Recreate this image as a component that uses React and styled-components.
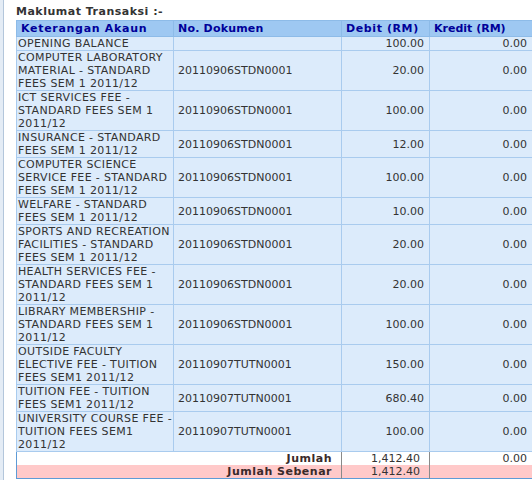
import React from 'react'
import styled, { createGlobalStyle } from 'styled-components'

const GlobalStyle = createGlobalStyle`
  html, body {
    margin: 0;
    padding: 0;
    background: #ffffff;
  }
  body {
    font-family: "DejaVu Sans", Verdana, sans-serif;
    font-size: 11px;
    color: #333333;
  }
`

const Page = styled.div`
  display: flex;
  min-height: 480px;
`

const SideStrip = styled.div`
  width: 3px;
  flex: none;
  background: #e4ecf5;
  border-right: 1px solid #b3c6db;
`

const Content = styled.div`
  flex: 1;
  padding: 5px 0 0 12px;
  overflow: hidden;
`

const Heading = styled.div`
  font-weight: bold;
  line-height: 13px;
  letter-spacing: 0.5px;
  color: #333333;
  margin: 0 0 2px 0;
`

const Table = styled.table`
  border-collapse: collapse;
  table-layout: fixed;
  width: 516px;
  border: 1px solid #5d9bd6;
  line-height: 13px;
`

const Th = styled.th`
  background: #9ec8f2;
  color: #000099;
  font-weight: bold;
  text-align: left;
  padding: 1px 0 1px 4px;
  border: 1px solid #8dbbe8;
  white-space: nowrap;
  letter-spacing: ${p => p.$ls || 0}px;
`

const Td = styled.td`
  background: #dcebfb;
  border: 1px solid #a9cbee;
  padding: 0 ${p => (p.$num ? '5px' : '1px')} 0 ${p => (p.$doc ? '4px' : '1px')};
  text-align: ${p => (p.$num ? 'right' : 'left')};
  vertical-align: middle;
  white-space: nowrap;
  color: #333333;
  letter-spacing: ${p => (p.$num || p.$doc ? 0 : 0.35)}px;
`

const TotalCell = styled.td`
  background: ${p => (p.$pink ? '#ffc9c9' : '#ffffff')};
  border: none;
  border-right: ${p => (p.$line ? '1px solid #8a8a8a' : 'none')};
  padding: 0 9px 0 1px;
  text-align: right;
  font-weight: ${p => (p.$bold ? 'bold' : 'normal')};
  letter-spacing: ${p => (p.$bold ? 0.5 : 0)}px;
  color: ${p => (p.$bold ? '#3a2a2a' : '#333333')};
  white-space: nowrap;
`

const rows = [
  { desc: ['OPENING BALANCE'], doc: '', debit: '100.00' },
  { desc: ['COMPUTER LABORATORY', 'MATERIAL - STANDARD', 'FEES SEM 1 2011/12'], doc: '20110906STDN0001', debit: '20.00' },
  { desc: ['ICT SERVICES FEE -', 'STANDARD FEES SEM 1', '2011/12'], doc: '20110906STDN0001', debit: '100.00' },
  { desc: ['INSURANCE - STANDARD', 'FEES SEM 1 2011/12'], doc: '20110906STDN0001', debit: '12.00' },
  { desc: ['COMPUTER SCIENCE', 'SERVICE FEE - STANDARD', 'FEES SEM 1 2011/12'], doc: '20110906STDN0001', debit: '100.00' },
  { desc: ['WELFARE - STANDARD', 'FEES SEM 1 2011/12'], doc: '20110906STDN0001', debit: '10.00' },
  { desc: ['SPORTS AND RECREATION', 'FACILITIES - STANDARD', 'FEES SEM 1 2011/12'], doc: '20110906STDN0001', debit: '20.00' },
  { desc: ['HEALTH SERVICES FEE -', 'STANDARD FEES SEM 1', '2011/12'], doc: '20110906STDN0001', debit: '20.00' },
  { desc: ['LIBRARY MEMBERSHIP -', 'STANDARD FEES SEM 1', '2011/12'], doc: '20110906STDN0001', debit: '100.00' },
  { desc: ['OUTSIDE FACULTY', 'ELECTIVE FEE - TUITION', 'FEES SEM1 2011/12'], doc: '20110907TUTN0001', debit: '150.00' },
  { desc: ['TUITION FEE - TUITION', 'FEES SEM1 2011/12'], doc: '20110907TUTN0001', debit: '680.40' },
  { desc: ['UNIVERSITY COURSE FEE -', 'TUITION FEES SEM1', '2011/12'], doc: '20110907TUTN0001', debit: '100.00' },
]

export default function App() {
  return (
    <>
      <GlobalStyle />
      <Page>
        <SideStrip />
        <Content>
          <Heading>Maklumat Transaksi :-</Heading>
          <Table>
            <colgroup>
              <col style={{ width: 157 }} />
              <col style={{ width: 168 }} />
              <col style={{ width: 88 }} />
              <col style={{ width: 103 }} />
            </colgroup>
            <thead>
              <tr>
                <Th $ls={0.7}>Keterangan Akaun</Th>
                <Th $ls={0.2}>No. Dokumen</Th>
                <Th $ls={0.6}>Debit (RM)</Th>
                <Th>Kredit (RM)</Th>
              </tr>
            </thead>
            <tbody>
              {rows.map((r, i) => (
                <tr key={i}>
                  <Td>
                    {r.desc.map((line, j) => (
                      <React.Fragment key={j}>
                        {j > 0 && <br />}
                        {line}
                      </React.Fragment>
                    ))}
                  </Td>
                  <Td $doc>{r.doc}</Td>
                  <Td $num>{r.debit}</Td>
                  <Td $num>0.00</Td>
                </tr>
              ))}
              <tr>
                <TotalCell colSpan={2} $bold $line>Jumlah</TotalCell>
                <TotalCell $line>1,412.40</TotalCell>
                <TotalCell style={{ paddingRight: 5 }}>0.00</TotalCell>
              </tr>
              <tr>
                <TotalCell colSpan={2} $bold $line $pink>Jumlah Sebenar</TotalCell>
                <TotalCell $line $pink>1,412.40</TotalCell>
                <TotalCell $pink></TotalCell>
              </tr>
            </tbody>
          </Table>
        </Content>
      </Page>
    </>
  )
}
